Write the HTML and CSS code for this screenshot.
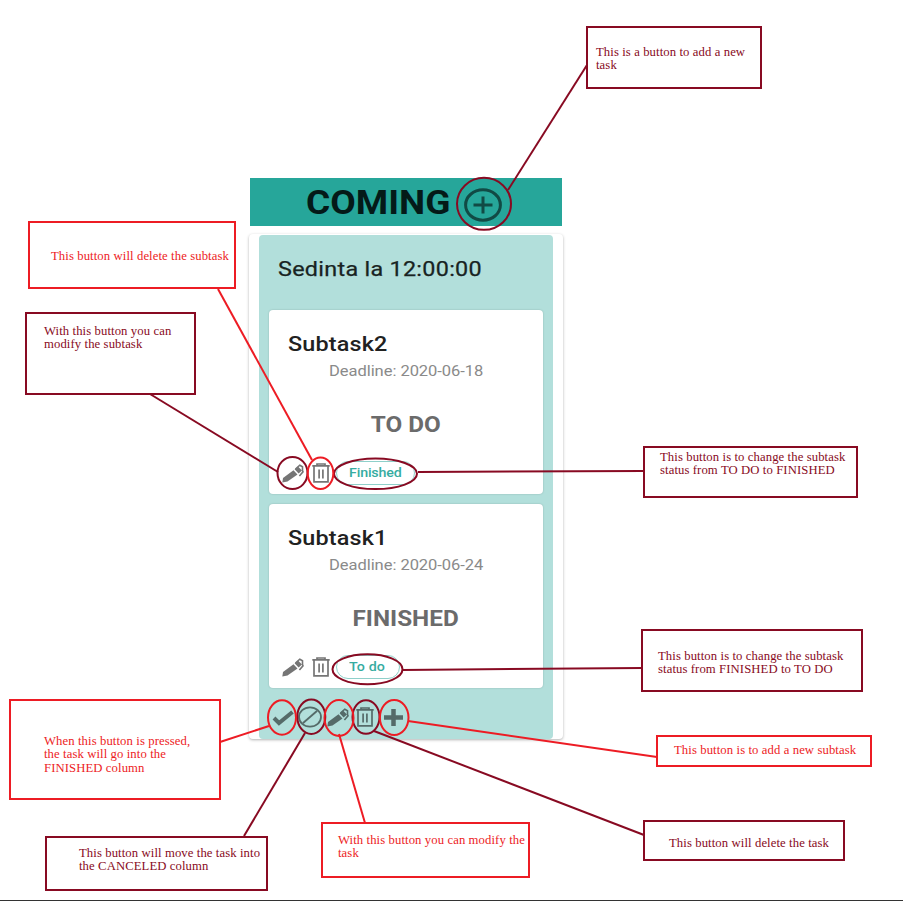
FILE: index.html
```html
<!DOCTYPE html>
<html lang="en">
<head>
<meta charset="utf-8">
<title>Task board guide</title>
<link rel="stylesheet" href="styles.css">
</head>
<body>
<svg class="defs" width="0" height="0" aria-hidden="true">
  <symbol id="pen" viewBox="0 0 22 19" preserveAspectRatio="none">
    <path d="M.3 18.500 1 14 11.500 6.200l4 4.200L5.500 17.500z" fill="currentColor"/>
    <path d="M12.600 5.300 16 2.600l4 3.800-3.400 3z" fill="currentColor"/>
    <path d="M13.500 5 17.800 1.200l2.700 1.600v3.800l.5 1.200-3.600 4.200" fill="none" stroke="currentColor" stroke-width="1.600"/>
  </symbol>
  <symbol id="trash" viewBox="0 0 18 20" preserveAspectRatio="none">
    <path d="M.3 2.800h17.400M5 2.300V1h8v1.300M2 3v15.900h14V3M7.100 6.500v9M10.900 6.500v9" fill="none" stroke="currentColor" stroke-width="1.700"/>
  </symbol>
</svg>
<main class="canvas">
  <section class="board">
    <header class="board-head">
      <h1><span class="wide">COMING</span></h1>
      <svg class="add" viewBox="0 0 38 34"><ellipse cx="19" cy="17" rx="17.400" ry="15.200"/><path d="M9.500 17h19M19 8.500v17"/></svg>
    </header>
    <div class="column">
      <article class="task">
        <h2><span class="wide">Sedinta la 12:00:00</span></h2>
        <div class="subtask">
          <h3><span class="wide">Subtask2</span></h3>
          <p class="deadline"><span class="wide">Deadline: 2020-06-18</span></p>
          <p class="status"><span class="wide">TO DO</span></p>
          <div class="actions">
            <svg class="pen"><use href="#pen"/></svg>
            <svg class="trash"><use href="#trash"/></svg>
            <button class="chip finished"><span class="wide">Finished</span></button>
          </div>
        </div>
        <div class="subtask">
          <h3><span class="wide">Subtask1</span></h3>
          <p class="deadline"><span class="wide">Deadline: 2020-06-24</span></p>
          <p class="status"><span class="wide">FINISHED</span></p>
          <div class="actions">
            <svg class="pen"><use href="#pen"/></svg>
            <svg class="trash"><use href="#trash"/></svg>
            <button class="chip todo"><span class="wide">To do</span></button>
          </div>
        </div>
        <footer class="task-actions">
          <svg class="check" viewBox="0 0 22 17"><path d="M2 9 7 14 20.500 3"/></svg>
          <svg class="ban" viewBox="0 0 24 22"><ellipse cx="12" cy="11" rx="11" ry="9.700"/><path d="M4.800 17.300 19.200 4.700"/></svg>
          <svg class="pen"><use href="#pen"/></svg>
          <svg class="trash"><use href="#trash"/></svg>
          <svg class="plus" viewBox="0 0 19 17"><path d="M0 8.500h19M9.500 0v17"/></svg>
        </footer>
      </article>
    </div>
  </section>

  <svg class="links" viewBox="0 0 903 901">
    <g class="dark">
      <ellipse cx="484" cy="203.800" rx="27" ry="26"/><path d="M587 65 508 190"/>
      <ellipse cx="292.500" cy="473" rx="15" ry="16"/><path d="M150 394 278 472"/>
      <ellipse cx="375.500" cy="473.800" rx="41.500" ry="15.300"/><path d="M418 472 643 471"/>
      <ellipse cx="367.500" cy="669.200" rx="35" ry="15"/><path d="M402 670 642 668"/>
      <ellipse cx="311.300" cy="716.800" rx="14" ry="17.200"/><path d="M305 733 244 836"/>
      <ellipse cx="366" cy="717" rx="13.500" ry="16.700"/><path d="M374 731 644 835"/>
    </g>
    <g class="red">
      <ellipse cx="320.500" cy="473.200" rx="12.800" ry="15.700"/><path d="M218 289 312 460"/>
      <ellipse cx="282" cy="717.500" rx="14" ry="17.300"/><path d="M220 742 269 726"/>
      <ellipse cx="339" cy="718" rx="14.500" ry="18"/><path d="M339 734 365 823"/>
      <ellipse cx="394.200" cy="717.500" rx="14.300" ry="17.500"/><path d="M408 721 657 757"/>
    </g>
  </svg>

  <p class="note dark n-add">This is a button to add a new<br>task</p>
  <p class="note red n-delsub">This button will delete the subtask</p>
  <p class="note dark n-modsub">With this button you can<br>modify the subtask</p>
  <p class="note dark n-tofin">This button is to change the subtask<br>status from TO DO to FINISHED</p>
  <p class="note dark n-totodo">This button is to change the subtask<br>status from FINISHED to TO DO</p>
  <p class="note red n-finish">When this button is pressed,<br>the task will go into the<br>FINISHED column</p>
  <p class="note red n-newsub">This button is to add a new subtask</p>
  <p class="note dark n-cancel">This button will move the task into<br>the CANCELED column</p>
  <p class="note red n-modtask">With this button you can modify the<br>task</p>
  <p class="note dark n-deltask">This button will delete the task</p>
</main>
</body>
</html>
```
FILE: styles.css
```css
* { box-sizing: border-box; }
body { margin: 0; background: #fff; font-family: Roboto, sans-serif; }
h1, h2, h3, p { margin: 0; }
.defs { position: absolute; }
svg { display: block; flex: none; }
.canvas {
  position: relative;
  width: 903px;
  height: 901px;
  padding-top: 178px;
  overflow: hidden;
  border-bottom: 1px solid #333;
}
.wide { display: inline-block; transform: scaleX(1.14); transform-origin: left; white-space: nowrap; }

.board { width: 314px; margin-left: 249px; }
.board-head { display: flex; height: 48px; margin: 0 1px; padding-left: 56px; background: #26a69a; }
.board-head h1 { width: 158px; font-size: 32.500px; font-weight: 700; line-height: 50px; color: #041a18; }
.add { width: 38px; height: 34px; margin-top: 10px; fill: none; stroke: #114a45; stroke-width: 3; }
.column {
  height: 505px;
  margin-top: 8px;
  padding: 1px 10px 0;
  border-radius: 4px;
  background: #fff;
  box-shadow: 0 1px 3px rgba(0, 0, 0, .3);
}
.task { height: 504px; padding: 0 10px; border-radius: 4px; background: #b2dfdb; color: #556b69; }
.task h2 { height: 75px; padding-left: 9px; font-size: 20.500px; font-weight: 400; line-height: 68px; letter-spacing: .25px; color: #182322; -webkit-text-stroke: .25px; }
.subtask {
  height: 184px;
  margin-bottom: 10px;
  padding: 20px 0 0 12px;
  border-radius: 4px;
  background: #fff;
  box-shadow: 0 0 2px rgba(0, 0, 0, .2);
  color: #757575;
}
.subtask h3 { padding-left: 7px; font-size: 20.500px; font-weight: 500; line-height: 28px; letter-spacing: .15px; color: #212121; }
.deadline { padding-left: 48px; font-size: 14.500px; line-height: 28px; letter-spacing: -.05px; color: #8a8a8a; }
.status { display: flex; justify-content: center; margin-left: -12px; padding-top: 25px; font-size: 21.300px; font-weight: 700; line-height: 28px; color: #6b6b6b; }
.status .wide { transform-origin: center; }
.actions { display: flex; align-items: center; height: 24px; margin-top: 22px; }
.pen { width: 22px; height: 19px; }
.trash { width: 18px; height: 20px; }
.actions .pen { margin: 0 8px 0 1px; }
.chip { height: 24px; margin: 0 0 0 6px; padding: 0 0 0 12px; border: 1px solid #8fd0ca; border-radius: 12px; background: #fff; font: 500 12.500px/22px Roboto, sans-serif; letter-spacing: -.15px; color: #36aca1; text-align: left; }
.chip.finished { width: 79px; }
.chip.todo { width: 64px; letter-spacing: .1px; }
.task-actions { display: flex; align-items: center; height: 38px; padding-left: 3px; }
.task-actions svg { fill: none; stroke: currentColor; }
.check { width: 22px; height: 17px; stroke-width: 4; }
.ban { width: 24px; height: 22px; margin: 0 5px 0 4px; stroke-width: 1.800; }
.task-actions .pen, .task-actions .trash { stroke: none; }
.task-actions .trash { margin: 0 10px 0 7px; }
.plus { width: 19px; height: 17px; stroke-width: 4.500; }

.dark { color: #880a22; stroke: #880a22; }
.red { color: #ed1c24; stroke: #ed1c24; }
.links { position: absolute; inset: 0; width: 903px; height: 901px; fill: none; stroke-width: 2; }
.note {
  position: absolute;
  border: 2px solid currentColor;
  font: 12.700px/13.300px "Liberation Serif", serif;
  letter-spacing: .1px;
  white-space: nowrap;
}
.n-add { left: 586px; top: 26px; width: 176px; height: 63px; padding: 18px 0 0 8px; }
.n-delsub { left: 28px; top: 221px; width: 208px; height: 68px; padding: 27px 0 0 21px; }
.n-modsub { left: 25px; top: 312px; width: 171px; height: 83px; padding: 11px 0 0 17px; }
.n-tofin { left: 643px; top: 446px; width: 215px; height: 52px; padding: 3px 0 0 15px; }
.n-totodo { left: 641px; top: 629px; width: 222px; height: 63px; padding: 19px 0 0 15px; }
.n-finish { left: 9px; top: 699px; width: 212px; height: 101px; padding: 34px 0 0 33px; }
.n-newsub { left: 656px; top: 735px; width: 216px; height: 32px; padding: 7px 0 0 16px; }
.n-cancel { left: 45px; top: 836px; width: 223px; height: 55px; padding: 9px 0 0 32px; }
.n-modtask { left: 321px; top: 822px; width: 209px; height: 56px; padding: 10px 0 0 15px; }
.n-deltask { left: 643px; top: 820px; width: 202px; height: 41px; padding: 15px 0 0 24px; }
```
